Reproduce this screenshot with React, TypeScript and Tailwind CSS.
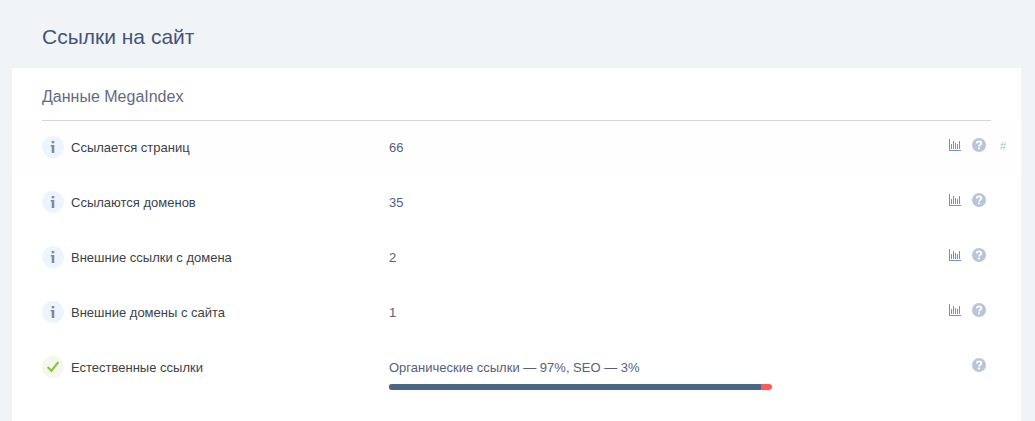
import React from "react";

type Row = {
  label: string;
  value: string;
  status: "info" | "ok";
  chart?: boolean;
  active?: boolean;
  split?: number;
};

const rows: Row[] = [
  { label: "Ссылается страниц", value: "66", status: "info", chart: true, active: true },
  { label: "Ссылаются доменов", value: "35", status: "info", chart: true },
  { label: "Внешние ссылки с домена", value: "2", status: "info", chart: true },
  { label: "Внешние домены с сайта", value: "1", status: "info", chart: true },
  { label: "Естественные ссылки", value: "Органические ссылки — 97%, SEO — 3%", status: "ok", split: 97 },
];

function StatusIcon({ status }: { status: Row["status"] }) {
  if (status === "ok") {
    return (
      <svg className="size-[22px] shrink-0" viewBox="0 0 22 22" aria-hidden="true">
        <circle cx="11" cy="11" r="11" fill="#f5f6ee" />
        <path d="M5.6 11 L9.4 14.8 L16.4 6" fill="none" stroke="#8cc63e" strokeWidth="2.2" />
      </svg>
    );
  }
  return (
    <svg className="size-[22px] shrink-0" viewBox="0 0 22 22" aria-hidden="true">
      <circle cx="11" cy="11" r="11" fill="#ecf5fe" />
      <path d="M9.7 5h2.6v2.2H9.7zM8.7 9h3.6v8H9.7v-6.4h-1z" fill="#8088a3" />
    </svg>
  );
}

function ChartIcon() {
  return (
    <svg className="h-3 w-3" viewBox="0 0 12 12" shapeRendering="crispEdges" aria-hidden="true">
      <path
        d="M0 0h1v11h11v1H0zM2 5h1v5H2zM4 2h1v8H4zM6 4h1v6H6zM8 5h1v5H8zM10 2h1v8h-1z"
        fill="#7790bd"
      />
    </svg>
  );
}

function HelpIcon() {
  return (
    <svg className="size-[14px]" viewBox="0 0 14 14" aria-hidden="true">
      <circle cx="7" cy="7" r="7" fill="#b9c5d8" />
      <path
        d="M4.7 5.4C4.7 4 5.7 3.3 7 3.3s2.3.7 2.3 1.9c0 1.5-2.2 1.5-2.2 3.2"
        fill="none"
        stroke="#fff"
        strokeWidth="1.8"
      />
      <path d="M6 9.4h2v1.9H6z" fill="#fff" />
    </svg>
  );
}

function MetricRow({ row }: { row: Row }) {
  return (
    <li
      className={
        row.active
          ? "grid h-[55px] grid-cols-[347fr_383fr_219fr_30px] bg-[#fefefe] pl-[30px]"
          : "grid h-[55px] grid-cols-[347fr_383fr_219fr_30px] pl-[30px]"
      }
    >
      <div className="flex items-start gap-[7px] pt-[15px] text-[13px] leading-[22px] text-[#3d3f47]">
        <StatusIcon status={row.status} />
        <span className="pt-px">{row.label}</span>
      </div>
      <div className="pt-4 text-[13px] leading-[22px] whitespace-nowrap text-[#56607a]">
        {row.value}
        {row.split !== undefined && (
          <div className="mt-[5px] flex h-[6px] overflow-hidden rounded-full bg-[#ff5a5a]">
            <div className="bg-[#4a6785]" style={{ width: `${row.split}%` }} />
          </div>
        )}
      </div>
      <div className="flex items-start justify-end gap-[11px] pt-[17px] pr-[5px]">
        {row.chart && (
          <button type="button" aria-label="График" className="flex h-[14px] items-center">
            <ChartIcon />
          </button>
        )}
        <button type="button" aria-label="Справка">
          <HelpIcon />
        </button>
      </div>
      <div className="pt-[17px] pl-[9px] text-[11px] leading-4 text-[#b4c0d3]">
        {row.active && <a href="#pages">#</a>}
      </div>
    </li>
  );
}

export default function App() {
  return (
    <main className="flex min-h-screen flex-col bg-[#f1f4f7] pr-[14px] pl-3 font-['Liberation_Sans',Arial,sans-serif]">
      <h1 className="px-[30px] pt-[22px] pb-4 text-[21px] leading-[30px] text-[#465377]">Ссылки на сайт</h1>
      <section className="grow bg-white pt-[17px]">
        <h2 className="mx-[30px] border-b border-[#ccd9e4] pb-[11px] text-[16px] leading-6 text-[#656a80]">
          Данные MegaIndex
        </h2>
        <ul>
          {rows.map((row) => (
            <MetricRow key={row.label} row={row} />
          ))}
        </ul>
      </section>
    </main>
  );
}
